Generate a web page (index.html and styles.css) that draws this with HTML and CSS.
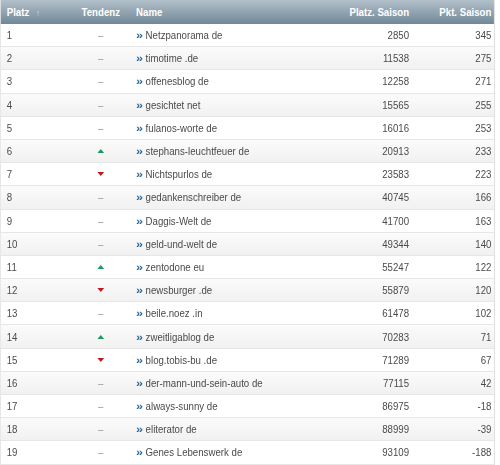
FILE: index.html
```html
<!DOCTYPE html>
<html>
<head>
<meta charset="utf-8">
<link rel="stylesheet" href="styles.css">
</head>
<body>
<div class="frame">
<div class="table">
  <div class="row head">
    <div class="c platz">Platz <span class="sort">&#x2191;</span></div>
    <div class="c tend">Tendenz</div>
    <div class="c name">Name</div>
    <div class="c num">Platz. Saison</div>
    <div class="c num last">Pkt. Saison</div>
  </div>
  <div class="row"><div class="c platz">1</div><div class="c tend"><span class="dash">–</span></div><div class="c name"><span class="ico">»</span>Netzpanorama de</div><div class="c num">2850</div><div class="c num last">345</div></div>
  <div class="row alt"><div class="c platz">2</div><div class="c tend"><span class="dash">–</span></div><div class="c name"><span class="ico">»</span>timotime .de</div><div class="c num">11538</div><div class="c num last">275</div></div>
  <div class="row"><div class="c platz">3</div><div class="c tend"><span class="dash">–</span></div><div class="c name"><span class="ico">»</span>offenesblog de</div><div class="c num">12258</div><div class="c num last">271</div></div>
  <div class="row alt"><div class="c platz">4</div><div class="c tend"><span class="dash">–</span></div><div class="c name"><span class="ico">»</span>gesichtet net</div><div class="c num">15565</div><div class="c num last">255</div></div>
  <div class="row"><div class="c platz">5</div><div class="c tend"><span class="dash">–</span></div><div class="c name"><span class="ico">»</span>fulanos-worte de</div><div class="c num">16016</div><div class="c num last">253</div></div>
  <div class="row alt"><div class="c platz">6</div><div class="c tend"><span class="up"></span></div><div class="c name"><span class="ico">»</span>stephans-leuchtfeuer de</div><div class="c num">20913</div><div class="c num last">233</div></div>
  <div class="row"><div class="c platz">7</div><div class="c tend"><span class="down"></span></div><div class="c name"><span class="ico">»</span>Nichtspurlos de</div><div class="c num">23583</div><div class="c num last">223</div></div>
  <div class="row alt"><div class="c platz">8</div><div class="c tend"><span class="dash">–</span></div><div class="c name"><span class="ico">»</span>gedankenschreiber de</div><div class="c num">40745</div><div class="c num last">166</div></div>
  <div class="row"><div class="c platz">9</div><div class="c tend"><span class="dash">–</span></div><div class="c name"><span class="ico">»</span>Daggis-Welt de</div><div class="c num">41700</div><div class="c num last">163</div></div>
  <div class="row alt"><div class="c platz">10</div><div class="c tend"><span class="dash">–</span></div><div class="c name"><span class="ico">»</span>geld-und-welt de</div><div class="c num">49344</div><div class="c num last">140</div></div>
  <div class="row"><div class="c platz">11</div><div class="c tend"><span class="up"></span></div><div class="c name"><span class="ico">»</span>zentodone eu</div><div class="c num">55247</div><div class="c num last">122</div></div>
  <div class="row alt"><div class="c platz">12</div><div class="c tend"><span class="down"></span></div><div class="c name"><span class="ico">»</span>newsburger .de</div><div class="c num">55879</div><div class="c num last">120</div></div>
  <div class="row"><div class="c platz">13</div><div class="c tend"><span class="dash">–</span></div><div class="c name"><span class="ico">»</span>beile.noez .in</div><div class="c num">61478</div><div class="c num last">102</div></div>
  <div class="row alt"><div class="c platz">14</div><div class="c tend"><span class="up"></span></div><div class="c name"><span class="ico">»</span>zweitligablog de</div><div class="c num">70283</div><div class="c num last">71</div></div>
  <div class="row"><div class="c platz">15</div><div class="c tend"><span class="down"></span></div><div class="c name"><span class="ico">»</span>blog.tobis-bu .de</div><div class="c num">71289</div><div class="c num last">67</div></div>
  <div class="row alt"><div class="c platz">16</div><div class="c tend"><span class="dash">–</span></div><div class="c name"><span class="ico">»</span>der-mann-und-sein-auto de</div><div class="c num">77115</div><div class="c num last">42</div></div>
  <div class="row"><div class="c platz">17</div><div class="c tend"><span class="dash">–</span></div><div class="c name"><span class="ico">»</span>always-sunny de</div><div class="c num">86975</div><div class="c num last">-18</div></div>
  <div class="row alt"><div class="c platz">18</div><div class="c tend"><span class="dash">–</span></div><div class="c name"><span class="ico">»</span>eliterator de</div><div class="c num">88999</div><div class="c num last">-39</div></div>
  <div class="row"><div class="c platz">19</div><div class="c tend"><span class="dash">–</span></div><div class="c name"><span class="ico">»</span>Genes Lebenswerk de</div><div class="c num">93109</div><div class="c num last">-188</div></div>
</div>
</div>
</body>
</html>
```
FILE: styles.css
```css
html, body {
  margin: 0;
  padding: 0;
  background: #fff;
}
body {
  font-family: "Liberation Sans", Arial, sans-serif;
  font-size: 11.5px;
  color: #4a4a4a;
}
.frame {
  width: 495px;
  overflow: hidden;
}
/* the whole table is drawn at a wider width and condensed horizontally */
.table {
  width: 589px;
  transform: scaleX(0.84);
  transform-origin: 0 0;
  border-left: 1px solid #e2e2e2;
  border-right: 1px solid #d8d8d8;
  box-sizing: border-box;
}
.row {
  display: grid;
  grid-template-columns: 65px 90px 1fr 107px 95px;
  height: 23.2px;
  border-bottom: 1px solid #e6e6e6;
  box-sizing: border-box;
  align-items: center;
}
.row.alt {
  background: linear-gradient(#fbfbfb, #f1f1f1);
}
.row.head {
  height: 24px;
  border-bottom: none;
  background: linear-gradient(#b2c0ca, #718797);
  color: #fff;
  font-weight: bold;
}
.c {
  white-space: nowrap;
  overflow: hidden;
}
.platz {
  padding-left: 7px;
}
.sort {
  color: #d2dbe2;
  font-size: 9px;
  margin-left: 5px;
}
.tend {
  padding-left: 18px;
  display: flex;
  justify-content: center;
}
.dash {
  color: #999;
}
.up, .down {
  display: inline-block;
  width: 0;
  height: 0;
  border-left: 4px solid transparent;
  border-right: 4px solid transparent;
}
.up {
  border-bottom: 4px solid #1a9b62;
}
.down {
  border-top: 4px solid #c4161c;
}
.name {
  padding-left: 6px;
}
.ico {
  color: #2f6b99;
  font-weight: bold;
  font-size: 15px;
  line-height: 10px;
  margin-right: 3px;
  display: inline-block;
  transform: translateY(1.5px) scaleY(0.7);
}
.num {
  text-align: right;
  padding-right: 6px;
}
.num.last {
  padding-right: 3px;
}
```
